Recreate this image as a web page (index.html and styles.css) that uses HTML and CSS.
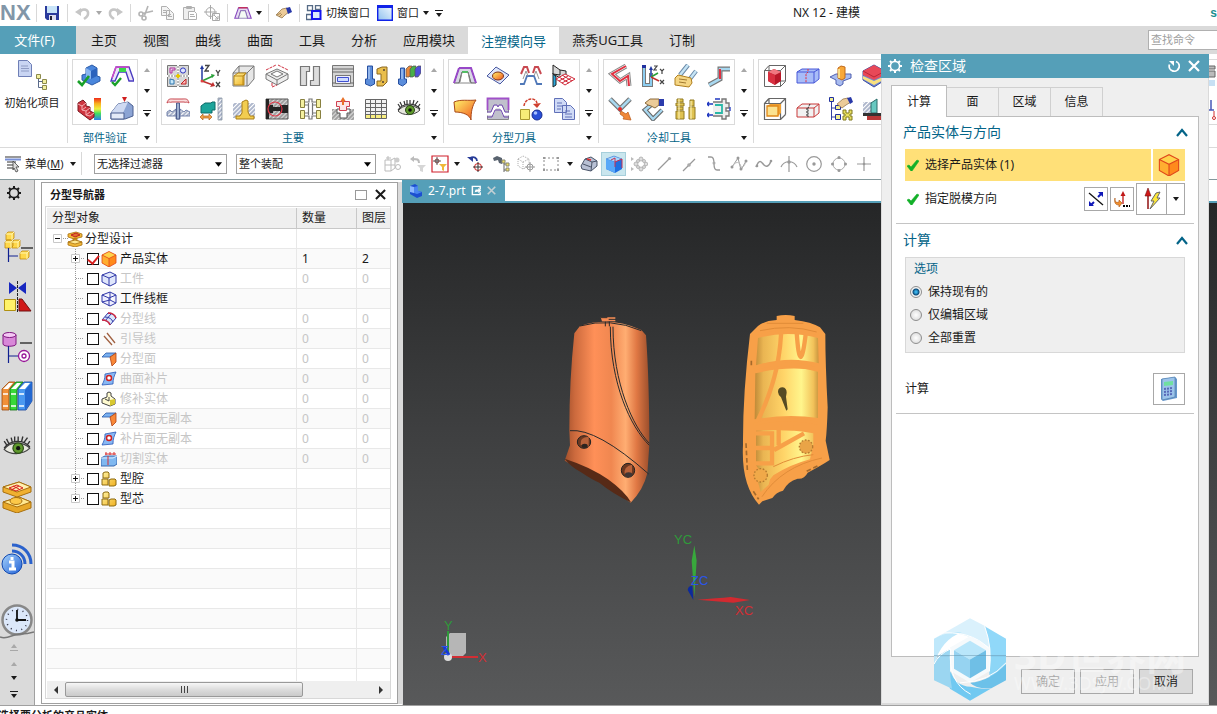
FILE: index.html
```html
<!DOCTYPE html>
<html lang="zh-CN">
<head>
<meta charset="utf-8">
<title>NX 12 - 建模</title>
<link rel="stylesheet" href="styles.css">
</head>
<body>
<svg class="sprite" aria-hidden="true">
<defs>
<linearGradient id="gWin" x1="0" y1="1" x2="1" y2="0"><stop offset="0" stop-color="#8fc0ee"/><stop offset="1" stop-color="#f4faff"/></linearGradient>
<linearGradient id="gGold" x1="0" y1="0" x2="1" y2="1"><stop offset="0" stop-color="#fff3a0"/><stop offset="1" stop-color="#f0b020"/></linearGradient>
<linearGradient id="gOrange" x1="0" y1="0" x2="1" y2="1"><stop offset="0" stop-color="#fff36a"/><stop offset="1" stop-color="#f0521c"/></linearGradient>
<linearGradient id="gRain" x1="0" y1="0" x2="0" y2="1"><stop offset="0" stop-color="#f02a1a"/><stop offset=".25" stop-color="#f8b020"/><stop offset=".5" stop-color="#f0f040"/><stop offset=".7" stop-color="#40e060"/><stop offset="1" stop-color="#3080f0"/></linearGradient>
<linearGradient id="gBlue" x1="0" y1="0" x2="1" y2="1"><stop offset="0" stop-color="#a8d4fb"/><stop offset="1" stop-color="#1f5fd6"/></linearGradient>
<pattern id="hatch" width="3" height="3" patternUnits="userSpaceOnUse" patternTransform="rotate(45)"><rect width="3" height="3" fill="#fff"/><path d="M1 0v3" stroke="#5d6f9a" stroke-width="1"/></pattern>
<pattern id="hatchG" width="3" height="3" patternUnits="userSpaceOnUse" patternTransform="rotate(45)"><rect width="3" height="3" fill="#ddd"/><path d="M1 0v3" stroke="#666" stroke-width="1"/></pattern>
</defs>
<symbol id="caret" viewBox="0 0 6 4"><path d="M0 0h6L3 4z"/></symbol>
<symbol id="caretUp" viewBox="0 0 6 4"><path d="M0 4h6L3 0z"/></symbol>
<symbol id="caretBar" viewBox="0 0 8 7"><path d="M0 0h8v1H0zM1 3h6L4 7z"/></symbol>
<symbol id="save" viewBox="0 0 16 16"><path d="M1 1h14v14H3l-2-2z" fill="#2a3a9c"/><path d="M3 1h10v7H3z" fill="#c8e4f8"/><path d="M5 10h7v5H5z" fill="#dde"/><path d="M6 11h2v4H6z" fill="#223"/></symbol>
<symbol id="undo" viewBox="0 0 16 16"><path d="M0 7l6-4v8z" fill="#c6c6c6"/><path d="M5 7c2-4 9-3 8 2 0 2-1 3-4 5" fill="none" stroke="#c6c6c6" stroke-width="2.600"/></symbol>
<symbol id="redo" viewBox="0 0 16 16"><path d="M16 7l-6-4v8z" fill="#c6c6c6"/><path d="M11 7C9 3 2 4 3 9c0 2 1 3 4 5" fill="none" stroke="#c6c6c6" stroke-width="2.600"/></symbol>
<symbol id="cut" viewBox="0 0 16 16"><g fill="none" stroke="#b4b4b4" stroke-width="1.600"><path d="M4.500 8.500 15 6M6.500 10.500 10 1"/><circle cx="3" cy="9" r="2"/><circle cx="6" cy="13" r="2"/></g></symbol>
<symbol id="copy" viewBox="0 0 16 16"><g fill="#f4f4f4" stroke="#b0b0b0"><path d="M1.500 1.500h5l3 3v6h-8zM6.500 5.500h4l3 3v6h-7z"/><path d="M3 5.500h3M3 7.500h3M8 9.500h3M8 11.500h4"/></g></symbol>
<symbol id="paste" viewBox="0 0 16 16"><g fill="#efefef" stroke="#b0b0b0"><path d="M1.500 2.500h11v12h-11zM4.500 1.500h5v2h-5z"/><path d="M6.500 6.500h6l2 2v6h-8z" fill="#fff"/><path d="M8 9.500h4M8 11.500h5"/></g></symbol>
<symbol id="target" viewBox="0 0 16 16"><g fill="none" stroke="#a8a8a8"><circle cx="6.500" cy="7" r="4.500"/><path d="M6.500 0v14M0 7h13M8.500 8.500h7v7h-7zM10 10l4 4v-3m0 3h-3"/></g></symbol>
<symbol id="trap" viewBox="0 0 24 24"><path d="M6 5h12l5 14h-5L15 9H9L6 19H1z" fill="#e6dcf2" stroke="#8a4cc0" stroke-width="1.500"/><path d="M6 5h12" stroke="#c03060" stroke-width="2"/><path d="M6 19 9 9h6l3 10z" fill="#f4fbf4" stroke="#7a6aa8"/></symbol>
<symbol id="hand" viewBox="0 0 16 16"><path d="m0 10 6-6 5-1 2 4-4 3-3 3-2-1z" fill="#eccb98" stroke="#8b6b3d" stroke-width=".7"/><path d="m10 3 4-1 2 5-4 2z" fill="#2838a8"/><path d="m1 10 4-2M3 12l3-3" stroke="#8b6b3d" stroke-width=".7"/></symbol>
<symbol id="switch" viewBox="0 0 16 16"><path d="M1.500.5h5v5h-5zM9.500.5h5v4h-5zM.5 9.500h5v5h-5z" fill="none" stroke="#566b86" stroke-width="1.300"/><path d="M6 6h8.500v8H6z" fill="#dceafd" stroke="#1616ee" stroke-width="2"/></symbol>
<symbol id="window" viewBox="0 0 16 16"><path d="M.7.7h14.600v14.600H.7z" fill="url(#gWin)" stroke="#1022e8" stroke-width="1.400"/><path d="M1 1h14v2H1z" fill="#1022e8"/></symbol>
<symbol id="initproj" viewBox="0 0 30 32"><path d="M1.500 1.500h9l4 4v12h-13z" fill="#c9d5f3" stroke="#6f7fb6"/><path d="M4 7h7M4 9.500h8M4 12h8" stroke="#8f9cc4"/><g fill="#f3f0a0" stroke="#8c8a4c"><path d="M19.500 15.500h4v4h-4zM25.500 20.500h4v4h-4zM25.500 26.500h4v4h-4z"/></g><path d="M21.500 20v8.500h4M21.500 22.500h4" fill="none" stroke="#5a6a8a"/></symbol>
<symbol id="partcheck" viewBox="0 0 24 24"><path d="M9 4l6-3 5 3v8l3 1v4l-8 4-10-5v-5l4-1z" fill="#4a86dc" stroke="#2a5aa8"/><path d="M9 4l5 3v8l-5-2z" fill="#8ab6f0"/><path d="M14 7l6-3v8l-6 3z" fill="#2b62bc"/><path d="m1 17 4 4 7-9" fill="none" stroke="#18a028" stroke-width="2.600"/></symbol>
<symbol id="trapcheck" viewBox="0 0 24 24"><path d="M6 3h13l5 14h-5L16 8H9L5 17H1z" fill="#ece4f8" stroke="#4a3cc0" stroke-width="1.400"/><path d="M6 3h13M2 14l4-11" stroke="#d04ac8" stroke-width="1.500"/><path d="M9 4h7v4H9z" fill="#38d848"/><path d="m2 18 3 3 6-7" fill="none" stroke="#18a028" stroke-width="2.400"/></symbol>
<symbol id="rain" viewBox="0 0 24 24"><path d="M17 1h7v22h-7z" fill="url(#gRain)"/><path d="M1 6l5-3 3 3v3l4 1v4l4 2v4l-4 3L1 14z" fill="#cf3540" stroke="#7a1820"/><path d="M1 7l4 2 4-3M5 9v4l4-3M5 13l4 1 4-3M9 14v4l4-3M9 18l4 1 4-3" fill="none" stroke="#f4b0b4"/></symbol>
<symbol id="slopetop" viewBox="0 0 24 24"><path d="M1 22v-6l7-9 10-2 5 4v10l-8 3z" fill="#8ca4d4" stroke="#4b5f90"/><path d="M1 16l7-9 10-2-5 11z" fill="#cfdaf2"/><path d="M1 16h13v6H1z" fill="#e4eaf8" stroke="#4b5f90"/><path d="M12 0h5l-2.500 5z" fill="#d02020"/></symbol>
<symbol id="cavity" viewBox="0 0 24 24"><path d="M1.500 1.500h21v21h-21z" fill="#d8d8d8" stroke="#777"/><path d="M12 1v22M1 12h22" stroke="#fff" stroke-width="2"/><path d="M12 2v20M2 12h20" stroke="#777" stroke-dasharray="2 1"/><path d="M4 4h5v2H6v3H4z" fill="#e8d0e8" stroke="#b030a0"/><circle cx="17" cy="6.500" r="2.600" fill="#dfe6ff" stroke="#3038c0"/><path d="M4 20v-5l4 1v4z" fill="#c8e8fa" stroke="#3078b0"/><path d="m15 20 5-5v5z" fill="#fbb" stroke="#c02020"/><path d="M12 10v4M10 12h4" stroke="#e8c800" stroke-width="2"/></symbol>
<symbol id="csys" viewBox="0 0 24 24"><path d="M3 17V3" stroke="#2038a0" stroke-width="1.500"/><path d="M1 5l2-4 2 4z" fill="#2038a0"/><path d="m3 17 11-5" stroke="#28a038" stroke-width="1.500"/><path d="m12 10 4 1-3 3z" fill="#28a038"/><path d="m3 17 11 4" stroke="#c03030" stroke-width="1.500"/><path d="m14 18 2 4-5 1z" fill="#c03030"/><circle cx="3" cy="17" r="1.500" fill="#e04040"/><path d="M6 1.500h4L6 7h4M17 6l2 3 2-3M19 9v3M17 18l4 5M21 18l-4 5" fill="none" stroke="#444" stroke-width="1.300"/></symbol>
<symbol id="wirebox" viewBox="0 0 24 24"><path d="M1 9l6-7h15v13l-6 7H1z" fill="#e6e6e6" stroke="#777"/><path d="M7 2v7M1 9h14v13M15 9l7-7" fill="none" stroke="#777"/><path d="M2 12l4-3h8l-2 3v9H2z" fill="url(#gGold)" stroke="#b88818"/><path d="M2 12h9v9M11 12l3-3" fill="none" stroke="#b88818"/></symbol>
<symbol id="stack" viewBox="0 0 24 24"><g fill="#eee" stroke="#777"><path d="M1 10v5l11 6 11-6v-5"/><path d="m1 10 11-5 11 5-11 6z"/><path d="m6 10 6-3 6 3-6 3z" fill="#fff"/><path d="M12 16v5"/></g><path d="M1 6l10-5M13 1l10 5M7 19v4l5-2" fill="none" stroke="#d03040" stroke-dasharray="3 1"/></symbol>
<symbol id="blocks" viewBox="0 0 24 24"><path d="M2.500 2.500h9v5h-3v14h-6zM21.500 2.500h-6v14h-3v5h9z" fill="#ddd" stroke="#777" stroke-width="1.200"/></symbol>
<symbol id="moldbase" viewBox="0 0 24 24"><path d="M1.500 1.500h21v21h-21z" fill="#d4d4d4" stroke="#777"/><path d="M1 5h22M1 8h22M1 19h22" stroke="#666"/><path d="M4.500 11.500h15v8h-15z" fill="#eef" stroke="#777"/><path d="M6.500 13.500h11v4h-11z" fill="#cfdcff" stroke="#4050d0"/></symbol>
<symbol id="pinplate" viewBox="0 0 24 24"><path d="M3.500 2h5v13h2v5l-4 2-5-2v-5h2z" fill="#5b8ddb" stroke="#2850a0"/><path d="M5 3v12" stroke="#c8dcfa"/><path d="M13 5l5-2h5v15l-4 4h-6v-5h4v-7h-4z" fill="#e9be4c" stroke="#8c6820"/><circle cx="20" cy="6" r="1" fill="#543"/><circle cx="19" cy="18" r="1" fill="#543"/></symbol>
<symbol id="library" viewBox="0 0 24 24"><path d="M3.500 4h4v11h2v4l-4 3-4-2v-5h2z" fill="#5b8ddb" stroke="#2850a0"/><path d="M5 5v10" stroke="#c8dcfa"/><g stroke="#555" stroke-width=".7"><path d="m9 5 3-3h3v8l-3 3H9z" fill="#e8883a"/><path d="m13 5 3-3h3v8l-3 3h-3z" fill="#48b048"/><path d="m18 5 3-3h3v7l-3 4h-3z" fill="#5050d8"/></g></symbol>
<symbol id="ejector" viewBox="0 0 24 24"><path d="M1 19v-4l3-2 2 2 4-3v10h4V12l4 3 2-2 4 2v4z" fill="url(#hatch)" stroke="#56689a" stroke-width=".8"/><path d="M10.500 6h3v16h-3z" fill="#9fb0d0" stroke="#506090"/><path d="M1 6c1-5 4-4 7-4h8c3 0 6-1 7 4-3-2-3 0-5-1H6C4 6 3 4 1 6z" fill="#fadddd" stroke="#c84850"/></symbol>
<symbol id="slider" viewBox="0 0 24 24"><path d="M19 1h4v22h-4z" fill="url(#hatch)" stroke="#678" stroke-width=".6"/><path d="M2 9l4-3h6l1-1h3v8h-3v3H2z" fill="#1ca49a" stroke="#0c6a68"/><path d="m1 20 3-3v2h6v-2l3 3-3 3v-2H4v2z" fill="#f0a048" stroke="#b06018" stroke-width=".7"/></symbol>
<symbol id="insert" viewBox="0 0 24 24"><path d="M1 6h22v15H1z" fill="url(#hatch)"/><path d="M4 22v-3h4l2-3V5l4-2 2 1v11l2 4h4v3z" fill="#f2cd50" stroke="#a87c18"/></symbol>
<symbol id="sprue" viewBox="0 0 24 24"><path d="M1 2h22v20H1z" fill="url(#hatchG)" stroke="#555"/><path d="M1 2h3v6h4v2h7V8h8v8h-8v-2H8v2H4v6H1z" fill="#242424"/><circle cx="10" cy="12" r="7" fill="none" stroke="#e03848" stroke-width="1.200"/></symbol>
<symbol id="runner" viewBox="0 0 24 24"><path d="M7 5h4V2h3v3h4M7 19h4v3h3v-3h4M10.500 6v12M14.500 6v12M7 8h3M7 16h3M15 8h3M15 16h3" fill="none" stroke="#777" stroke-width="1.200"/><g fill="#f4f0a0" stroke="#888040"><path d="M2.500 2.500h4v8h-4zM18.500 2.500h4v8h-4zM2.500 13.500h4v8h-4zM18.500 13.500h4v8h-4z"/></g></symbol>
<symbol id="pocket" viewBox="0 0 24 24"><path d="M1 12h22v11H1z" fill="url(#hatchG)"/><path d="M6 12v4h3v5h7v-5h3v-4z" fill="#fff" stroke="#555"/><path d="M5.500 4.500h13v5h-3v4h-7v-4h-3z" fill="#fbe8e8" stroke="#d04050"/><path d="M9.500 4 12 0l2.500 4H13v4h-2V4z" fill="#e87028"/></symbol>
<symbol id="bom" viewBox="0 0 24 24"><path d="M1.500 2.500h21v19h-21z" fill="#f2f2f2" stroke="#666"/><path d="M2 18h20v3H2z" fill="#f8ee80"/><path d="M1 6.500h22M1 10.500h22M1 14.500h22M1 17.500h22M6.500 2v19M11.500 2v19M17.500 2v19" stroke="#666"/></symbol>
<symbol id="eye" viewBox="0 0 24 24"><path d="M1 14C6 7 17 7 23 13c-6 6-17 6-22 1z" fill="#e8e8e0" stroke="#444"/><circle cx="13" cy="13" r="4.500" fill="#5f9a2c" stroke="#2b4a18"/><circle cx="13" cy="13" r="1.800" fill="#111"/><path d="M1 13C6 6 17 5 23 12M3 10 1 7M5 9 3 5M8 8 7 4M10 7V3M13 7V3M16 7l1-4M18 8l3-4M21 10l2-3" fill="none" stroke="#333" stroke-width="1.200"/></symbol>
<symbol id="trap2" viewBox="0 0 24 24"><path d="M6 4h12l5 15h-5L15 8H9L6 19H1z" fill="#d8d8e4" stroke="#555"/><path d="M6 4h12l5 15M6 4 1 19" fill="none" stroke="#9848c8" stroke-width="2"/><path d="M9 8h6" stroke="#38c850" stroke-width="1.500"/><path d="M9 8l-2 10M15 8l2 10M6 19h12" stroke="#888"/></symbol>
<symbol id="patch" viewBox="0 0 24 24"><path d="M1 12 10 3l13 8-9 9z" fill="#dfe6fa" stroke="#4858a0"/><ellipse cx="12" cy="12" rx="5.500" ry="4" fill="url(#gOrange)" stroke="#803018"/></symbol>
<symbol id="profile" viewBox="0 0 24 24"><path d="M2 10 5 3h3l2 6M14 9l2-6h3l3 7" fill="none" stroke="#c84850" stroke-width="2"/><path d="M1 20h4l3-8h7l3 8h5" fill="none" stroke="#5078b8" stroke-width="1.800"/><path d="m4 15 3-8 2 5M20 15l-3-8-2 5" fill="none" stroke="#999"/></symbol>
<symbol id="redmesh" viewBox="0 0 24 24"><path d="M1 9v14l3-2v-8z" fill="#2ca8dc" stroke="#222"/><path d="M1 1l7 5 6 1v4l-4 4-9-5z" fill="#d8d8d8" stroke="#222"/><path d="M8 6v5M1 10l7 1" stroke="#222"/><path d="m4 15 9-5 10 5-10 6zM7 13l10 6M10 11l10 6M7 17l9-5M10 19l9-5" fill="#fff" stroke="#d02838"/></symbol>
<symbol id="sheet" viewBox="0 0 24 24"><path d="M1 5c7-3 14-1 22-2-4 6-5 12-5 20-1-5-8-8-16-8z" fill="url(#gOrange)" stroke="#a84818"/></symbol>
<symbol id="corecav" viewBox="0 0 24 24"><path d="M1.500 1.500h21v21h-21z" fill="#c0c0cc" stroke="#888"/><path d="M1.500 13V1.500h21V13" fill="none" stroke="#a050c8" stroke-width="1.800"/><path d="M1 17h5l3-7h6l3 7h5" fill="none" stroke="#fff" stroke-width="3"/><path d="M1 15h4l3-7h3l1 2 1-2h3l3 7h4M1 20h5l3-7h6l3 7h5" fill="none" stroke="#7048b0"/></symbol>
<symbol id="swap" viewBox="0 0 24 24"><path d="M1.500 12.500h9v10h-9z" fill="#f6ec78" stroke="#a89830"/><circle cx="18" cy="18" r="5" fill="#2a50d8" stroke="#182c90"/><circle cx="16.500" cy="16" r="1.800" fill="#a8c0ff"/><path d="M5 9c1-9 13-9 13-2" fill="none" stroke="#d04030" stroke-width="1.500" stroke-dasharray="3 1"/><path d="m14 7 4 4 4-5z" fill="#d04030"/></symbol>
<symbol id="docs" viewBox="0 0 24 24"><g fill="#cfdaf6" stroke="#6070b8"><path d="M2.500 1.500h8l4 4v10h-12zM10.500 8.500h8l4 4v10h-12z"/><path d="M5 6h5M5 9h6M5 12h4M13 14h5M13 17h7M13 20h7"/></g></symbol>
<symbol id="chan1" viewBox="0 0 24 24"><path d="M18 2 4 10l8 7 8-5 1 10" fill="none" stroke="#888" stroke-width="5"/><path d="M18 2 4 10l8 7 8-5 1 10" fill="none" stroke="#fff" stroke-width="3"/><path d="M18 2 4 10l8 7 8-5 1 10" fill="none" stroke="#e03040" stroke-width="2"/></symbol>
<symbol id="chan2" viewBox="0 0 24 24"><path d="M3 1v20h7V9" fill="none" stroke="#777" stroke-width="4"/><path d="M3 1v20h7V9" fill="none" stroke="#8ccdf0" stroke-width="2"/><path d="M1 1h4v3H1z" fill="#2030a0"/><path d="M10 13V4" stroke="#2038a0" stroke-width="1.500"/><path d="m10 13 7-4" stroke="#28a038" stroke-width="1.500"/><path d="m10 13 8 4" stroke="#c03030" stroke-width="1.500"/><path d="M8 6l2-4 2 4z" fill="#2038a0"/><path d="M13 2h3l-3 4h3M19 5l2 2 2-2M21 7v3M19 16l4 4M23 16l-4 4" fill="none" stroke="#444" stroke-width="1.200"/></symbol>
<symbol id="chan3" viewBox="0 0 24 24"><path d="M14 1 6 11M22 7 12 20" fill="none" stroke="#6b8aa8" stroke-width="4.500"/><path d="M14 1 6 11M22 7 12 20" fill="none" stroke="#c5e4f5" stroke-width="2.500"/><path d="m1 14 3-3 13 3 1 5-3 4-14-2z" fill="#f5d684" stroke="#b08020"/><path d="m5 15 8 1M5 18l7 1" stroke="#a07830"/></symbol>
<symbol id="chan4" viewBox="0 0 24 24"><path d="M23 5H13v10L2 21" fill="none" stroke="#777" stroke-width="5"/><path d="M23 5H13v10L2 21" fill="none" stroke="#a8d8f0" stroke-width="2.600"/><path d="M13 5v10" stroke="#e03040" stroke-width="2"/></symbol>
<symbol id="chan5" viewBox="0 0 24 24"><path d="m2 2 10 10L22 2" fill="none" stroke="#777" stroke-width="5"/><path d="m2 2 10 10L22 2" fill="none" stroke="#a8d8f0" stroke-width="2.600"/><circle cx="12" cy="12" r="2" fill="#e82828"/><path d="m13 14 5 3 2-2 3 8-8-1 1-2-4-3z" fill="#f08838" stroke="#b85818" stroke-width=".7"/></symbol>
<symbol id="chan6" viewBox="0 0 24 24"><path d="M10 8 4 13l8 9 9-9" fill="none" stroke="#666" stroke-width="4.500"/><path d="M10 8 4 13l8 9 9-9" fill="none" stroke="#a8d8f0" stroke-width="2.400"/><path d="m4 6 5-4h9v6l-4 3-4-2-3-1z" fill="#eccb98" stroke="#8b6b3d"/><path d="M18 2h5v7h-5z" fill="#2c3cac"/></symbol>
<symbol id="fitting" viewBox="0 0 24 24"><g fill="#dfc252" stroke="#927a20"><path d="M3 2h6v3H3zM2 6h8v3H2zM3 10h6v3H3zM2 14h8v8H2zM16 3h4v6h-4zM15 10h6v12h-6z"/></g><path d="M5 2v20M17 4v18" stroke="#fff6c0"/></symbol>
<symbol id="circuit" viewBox="0 0 24 24"><path d="M6 5h9V2h4v4h3v5h-3v3h3v5h-3v3h-4v-3H6" fill="#eee" stroke="#777" stroke-width="1.400"/><path d="M8 8h7v8H8" fill="none" stroke="#2ab8a8" stroke-width="1.800"/><path d="M0 7h6M0 18h6M2 5 0 7l2 2M2 16l-2 2 2 2M8 2h5M23 10v4" stroke="#2038c0" fill="none" stroke-width="1.300"/></symbol>
<symbol id="redcube" viewBox="0 0 24 24"><path d="M1.500 6.500h16v16h-16zM6 1.500h16.500v16M1.500 6.500l4.500-5M17.500 6.500l5-5M17.500 22.500l5-5M6 2v15h16" fill="none" stroke="#666"/><path d="m5 8 6-3 7 3v9l-6 4-7-4z" fill="#b81828"/><path d="m5 8 6-3 7 3-6 3z" fill="#f07880"/><path d="m5 8 7 3v10l-7-4z" fill="#d83040"/></symbol>
<symbol id="bluebox" viewBox="0 0 24 24"><path d="M1 8l5-3h17v10l-5 4H1z" fill="#a8bcf8" stroke="#4858d8"/><path d="M1 8h17v11M18 8l5-3" fill="none" stroke="#4858d8"/><path d="M12 5v3l-2 2v9" fill="none" stroke="#e03040" stroke-dasharray="2 1"/></symbol>
<symbol id="crossbox" viewBox="0 0 24 24"><path d="m1 13 6-3h15v4l-8 3v3l-3 2-4-2v-4z" fill="#a8bcf0" stroke="#5060b0"/><path d="m9 4 3-2 4 1v11l-3 2-4-2z" fill="#f8a838" stroke="#c06818"/><path d="M10 5v9" stroke="#fff3a0" stroke-width="1.500"/></symbol>
<symbol id="layers" viewBox="0 0 24 24"><path d="m1 7 11-6 11 6v9l-11 7-11-7z" fill="#6c86d8" stroke="#4050a0"/><path d="m1 12 11 5 11-5v3l-11 6-11-6z" fill="#f8e080"/><path d="m1 7 11-6 11 6v4l-11 5-11-5z" fill="#e84858"/><path d="m1 7 11 6 11-6" fill="none" stroke="#b82838"/></symbol>
<symbol id="yellowbox" viewBox="0 0 24 24"><path d="M1.500 6.500h16v16h-16zM6 1.500h16.500v16M1.500 6.500l4.500-5M17.500 6.500l5-5M17.500 22.500l5-5M6 2v4" fill="none" stroke="#666" stroke-width="1.200"/><path d="M4 9l3-2h11v9l-3 3z" fill="#f0a030"/><path d="M4 9h11v10H4z" fill="#fbe290" stroke="#e08818" stroke-width="1.300"/></symbol>
<symbol id="redbox" viewBox="0 0 24 24"><path d="M1 11l5-4h17v9l-5 4H1z" fill="#f2f2f2" stroke="#c83838"/><path d="M1 11h17v9M18 11l5-4" fill="none" stroke="#c83838"/><path d="M14 7l-2 4v9M11 11v8" fill="none" stroke="#222" stroke-dasharray="2 1"/></symbol>
<symbol id="treehand" viewBox="0 0 24 24"><path d="M2.500 5v18M2.500 11h5M2.500 20h5" stroke="#3040a0" fill="none"/><g fill="#f0ee90" stroke="#2030a0"><path d="M.5.5h4v4h-4zM6.500 8.500h5v4h-5zM6.500 17.500h5v5h-5z"/></g><path d="m8 7 6-5 5-1 3 4-5 3-4 3z" fill="#eccb98" stroke="#8b6b3d" stroke-width=".7"/><path d="m18 1 4-1 2 5-3 2z" fill="#2838a8"/><path d="M14 13h3v3h3v-3h3v4h-2v2h2v4h-3v-3h-3v3h-3v-4h2v-2h-2z" fill="#e8e060" stroke="#807820"/></symbol>
<symbol id="cutaway" viewBox="0 0 24 24"><path d="M1 5h10v12H1z" fill="url(#hatch)"/><path d="M9 16V6l6-4v14z" fill="#68c8c0" stroke="#2a6a68"/><path d="M1 16h22v3H1z" fill="#333"/><path d="M5 19h15v4H5z" fill="#b83838"/></symbol>
<symbol id="bench" viewBox="0 0 24 24"><path d="M1 2h22v3H1zM1 7h22v6H1z" fill="#bbb" stroke="#666"/><path d="M1 16h22v6H1z" fill="#c8e0f4"/></symbol>
<symbol id="bracket" viewBox="0 0 24 24"><path d="M4 3v10h15V3M4 13h18" stroke="#4858b8" fill="none" stroke-width="1.500"/><path d="M22 14v5" stroke="#d03030"/><circle cx="22" cy="21" r="1.500" fill="none" stroke="#d03030"/></symbol>
<symbol id="menulist" viewBox="0 0 18 18"><path d="M1 2h16M3 7h9M3 10h7M3 13h7" stroke="#777" stroke-width="1.500"/><path d="M1 4.500h16" stroke="#7890d8" stroke-width="2"/><path d="m9 6 6 6h-3l2 4-2 1-2-4-1 2z" fill="#ddd" stroke="#444" stroke-width=".8"/></symbol>
<symbol id="s1" viewBox="0 0 18 18"><path d="M1 5h6v11H1zM7 5l4-2v10l-4 3M1 10h10M4 1v4M2 3h5" fill="none" stroke="#bbb"/><circle cx="13" cy="5" r="2.500" fill="#ccc"/><circle cx="14" cy="12" r="2.500" fill="none" stroke="#bbb"/></symbol>
<symbol id="s2" viewBox="0 0 18 18"><path d="M1 4l4-3v6z" fill="#bbb"/><path d="M4 4c4 0 6 0 6 4" fill="none" stroke="#bbb" stroke-width="2"/><path d="M8 10h9l-3 3v4l-3-1v-3z" fill="#d6d6d6"/></symbol>
<symbol id="s3" viewBox="0 0 18 18"><path d="M1 1h16v16H1z" fill="#fff" stroke="#d0202c" stroke-width="1.200"/><circle cx="6" cy="6" r="2" fill="none" stroke="#844"/><path d="M6 2v8M2 6h8" stroke="#333" stroke-width=".8"/><path d="M8 9h8l-3 3v4l-2-1v-3z" fill="#f0b838"/></symbol>
<symbol id="s4" viewBox="0 0 18 18"><path d="M0 2h6v5z" fill="#283c98"/><path d="M3 3c4-2 7 0 7 3" fill="none" stroke="#283c98" stroke-width="1.800"/><circle cx="11" cy="12" r="3.500" fill="#fff" stroke="#d02020"/><path d="M11 7v10M6 12h10" stroke="#333"/></symbol>
<symbol id="s5" viewBox="0 0 18 18"><path d="m1 3 4-2 5 2v6L7 8 6 5 2 6z" fill="#59636f"/><path d="M12 5v12M12 9h4M12 15h4" stroke="#666"/><path d="M10 5h3v3h-3zM14 8h3v3h-3zM14 13h3v3h-3z" fill="#f2e060" stroke="#887"/></symbol>
<symbol id="s6" viewBox="0 0 18 18"><path d="m1 4 5-3 6 3v7l-6 3-5-3zM1 4l5 3 6-3M6 7v7" fill="none" stroke="#aaa" stroke-dasharray="1 1"/><circle cx="13" cy="12" r="3" fill="#fff" stroke="#999"/><path d="M13 7v10M8 12h10" stroke="#999"/></symbol>
<symbol id="s7" viewBox="0 0 18 18"><path d="M2 3h14v12H2z" fill="none" stroke="#888" stroke-dasharray="2 2"/><path d="M1 2h2v2H1zM15 2h2v2h-2zM1 14h2v2H1zM15 14h2v2h-2z" fill="#999"/></symbol>
<symbol id="s8" viewBox="0 0 18 18"><path d="M1 11 5 4l6-2 6 4v5l-6 5-9-2z" fill="#b8c0d4" stroke="#4a5468"/><path d="m5 4 7 3 5-1M12 7l-1 9M3 9l8 3" fill="none" stroke="#4a5468"/><path d="m7 4 4 1" stroke="#e03030" stroke-width="1.500"/></symbol>
<symbol id="s9" viewBox="0 0 18 18"><path d="m1 4 8-3 8 3v10l-7 4-9-4z" fill="#1f6fe0"/><path d="m1 4 8-3 8 3-7 3z" fill="#a8d8ff" stroke="#4880d0" stroke-width=".6"/><path d="m1 4 9 3v11l-9-4z" fill="#58a8f8"/><path d="M10 7l7-3v9M10 7v5M6 5l4-2v4" fill="none" stroke="#c83050"/></symbol>
<symbol id="s10" viewBox="0 0 18 18"><g fill="#ddd" stroke="#aaa" stroke-width=".8"><circle cx="11" cy="4" r="2"/><circle cx="11" cy="14" r="2"/><circle cx="16" cy="9" r="1.800"/><circle cx="6" cy="9" r="2"/><circle cx="8" cy="6" r="1.500"/><circle cx="8" cy="12" r="1.500"/><circle cx="14" cy="12" r="1.500"/><circle cx="14" cy="6" r="1.500"/></g><path d="M1 2l3 2-3 2zM1 12l3 2-3 2z" fill="#bbb"/></symbol>
<symbol id="s11" viewBox="0 0 18 18"><path d="M3 15 14 4" stroke="#999" stroke-width="1.300"/><circle cx="14.500" cy="3.500" r="1.600" fill="#aaa"/></symbol>
<symbol id="s12" viewBox="0 0 18 18"><path d="M3 16 15 4" stroke="#999" stroke-width="1.300"/><circle cx="9" cy="10" r="1.800" fill="#aaa"/></symbol>
<symbol id="s13" viewBox="0 0 18 18"><path d="M3 2h3c6 0 0 13 6 13h3" fill="none" stroke="#999" stroke-width="1.300"/><circle cx="9" cy="8" r="1.500" fill="#aaa"/></symbol>
<symbol id="s14" viewBox="0 0 18 18"><path d="M2 12 8 3l3 12 5-9" fill="none" stroke="#999"/><path d="M2 12c3-6 8-6 9 0 2 1 4-2 5-6" fill="none" stroke="#bbb"/><g fill="#999"><circle cx="2" cy="12" r="1.500"/><circle cx="8" cy="3" r="1.500"/><circle cx="11" cy="14" r="1.500"/><circle cx="16" cy="6" r="1.500"/></g></symbol>
<symbol id="s15" viewBox="0 0 18 18"><path d="M1 12c4-10 6-4 8-2s5 2 7-4" fill="none" stroke="#999" stroke-width="1.500"/><circle cx="2" cy="11" r="1.300" fill="#999"/><circle cx="16" cy="6" r="1.300" fill="#999"/></symbol>
<symbol id="s16" viewBox="0 0 18 18"><path d="M1 12c3-7 13-7 16 0M9 1v16" fill="none" stroke="#999" stroke-width="1.200"/><circle cx="9" cy="7" r="1.700" fill="#999"/></symbol>
<symbol id="s17" viewBox="0 0 18 18"><circle cx="9" cy="9" r="7.300" fill="none" stroke="#999" stroke-width="1.200"/><circle cx="9" cy="9" r="1.700" fill="#999"/></symbol>
<symbol id="s18" viewBox="0 0 18 18"><circle cx="9" cy="9" r="6" fill="none" stroke="#aaa"/><g fill="#999"><circle cx="9" cy="2.500" r="1.500"/><circle cx="9" cy="15.500" r="1.500"/><circle cx="2.500" cy="9" r="1.500"/><circle cx="15.500" cy="9" r="1.500"/></g></symbol>
<symbol id="s19" viewBox="0 0 18 18"><path d="M9 2v14M2 9h14" stroke="#999" stroke-width="1.200"/><circle cx="9" cy="9" r="1.300" fill="#999"/></symbol>
<symbol id="gear" viewBox="0 0 16 16"><circle cx="8" cy="8" r="4.600" fill="none" stroke="currentColor" stroke-width="1.600"/><path d="M8 1v2M8 13v2M1 8h2M13 8h2M3 3l1.500 1.500M11.500 11.500 13 13M3 13l1.500-1.500M11.500 4.500 13 3" stroke="currentColor" stroke-width="2"/></symbol>
<symbol id="asm" viewBox="0 0 32 32"><g fill="#ffd84a" stroke="#c08a10" stroke-width=".8"><path d="m5 3 2-2h6v6l-2 2H5zM4 11l2-2h6v6l-2 2H4zM11 11l2-2h6v6l-2 2h-6zM19 22l2-2h7v6l-2 2h-7z"/></g><path d="M5 3h6v6M11 3l2-2M4 11h6v6M10 11l2-2M11 11h6v6M17 11l2-2M19 22h7v6M26 22l2-2" fill="none" stroke="#fff6b0"/><path d="M7.500 17v14M7.500 25H17" stroke="#102090" stroke-width="1.200"/><path d="M20 17h12" stroke="#111" stroke-width="1.200"/></symbol>
<symbol id="mirror" viewBox="0 0 32 32"><path d="M8 1l8 6-8 6zM25 1l-8 6 8 6z" fill="#1828c0"/><path d="M16.500 0v32" stroke="#222" stroke-dasharray="3 1"/><path d="M3.500 18.500h11v11h-11z" fill="#fff36a" stroke="#b09010"/><path d="M18 18h3l9 12H18z" fill="#d01818" stroke="#701010"/></symbol>
<symbol id="cyl" viewBox="0 0 32 32"><path d="M2 4v9c0 3 13 3 13 0V4z" fill="#d888d8" stroke="#801880"/><ellipse cx="8.500" cy="4" rx="6.500" ry="2.500" fill="#f4c8f4" stroke="#801880"/><path d="M7.500 15v17M7.500 25H17" stroke="#102090" stroke-width="1.200"/><path d="M19 12h12" stroke="#111" stroke-width="1.200"/><circle cx="23" cy="25" r="5.500" fill="#fff" stroke="#981898" stroke-width="1.300"/><circle cx="23" cy="25" r="2" fill="none" stroke="#981898" stroke-width="1.300"/></symbol>
<symbol id="books" viewBox="0 0 32 32"><g stroke-width=".8"><path d="m1 8 7-7h6l-6 8v20H1z" fill="#f09038" stroke="#9a4a10"/><path d="m9 8 6-7h7l-6 8v20H9z" fill="#38d838" stroke="#107010"/><path d="m17 8 6-7h8v19l-6 9h-8z" fill="#4a98f0" stroke="#103c98"/><path d="m24 9 7-8v19l-7 9z" fill="#2468d0"/><path d="M2 8l6-6h4l-5 6zM10 8l6-6h4l-5 6zM18 8l6-6h5l-5 6z" fill="#fff"/><path d="M2 13h5M2 25h5M10 13h5M10 25h5M18 13h5M18 25h5" stroke="#fff" stroke-width="1.500"/></g></symbol>
<symbol id="molds" viewBox="0 0 32 32"><g stroke="#a87010"><path d="m2 6 16-5 12 5v5l-14 5L2 11z" fill="#f0b030"/><path d="m2 6 16-5 12 5-14 5z" fill="#fff0b0"/><path d="m2 21 16-5 12 5v6l-14 5L2 27z" fill="#e8a828"/><path d="m2 21 16-5 12 5-14 5z" fill="#ffe890"/><ellipse cx="15" cy="20" rx="6" ry="3.500" fill="#fcc848"/></g><path d="m8 7 8-3 6 3-7 3zM12 5l6 3M10 9l8-4" fill="none" stroke="#d82020"/></symbol>
<symbol id="info" viewBox="0 0 32 32"><circle cx="11" cy="21" r="10" fill="url(#gBlue)" stroke="#1048b0"/><path d="M11 14v3M8 19h4v7M8 26h7" stroke="#fff" stroke-width="3" fill="none"/><path d="M11 8c7 0 13 5 13 13M11 2c11 0 19 8 19 19" fill="none" stroke="#2b62cc" stroke-width="3"/></symbol>
<symbol id="clock" viewBox="0 0 34 36"><circle cx="17" cy="16" r="14.500" fill="#dce8fa" stroke="#888" stroke-width="2.500"/><circle cx="17" cy="16" r="10.500" fill="none" stroke="#334" stroke-width="1.500" stroke-dasharray="1 4.500"/><path d="M17 6v10h9" fill="none" stroke="#111" stroke-width="1.800"/><circle cx="17" cy="16" r="1.800" fill="#111"/><path d="M0 33c8 3 12-3 20-3 6 0 8 0 14-2" fill="none" stroke="#777" stroke-width="1.500"/></symbol>
<symbol id="tRoot" viewBox="0 0 16 16"><g stroke="#a87010" stroke-width=".8"><path d="m1 3 8-2 6 2v3L7 8 1 6z" fill="#f0b838"/><path d="m6 8 4-1v3H6z" fill="#e8a020"/><path d="m1 11 7-2 7 2v3l-7 2-7-2z" fill="#f0b838"/><path d="m1 11 7-2 7 2-7 2z" fill="#ffe890"/></g><path d="m4 4 5-2 4 2-5 2z" fill="#e07030" stroke="#c02020"/></symbol>
<symbol id="tCube" viewBox="0 0 16 16"><path d="m1 4 7-3.500L15 4v8l-7 4-7-4z" fill="#ff8a1c"/><path d="m1 4 7-3.500L15 4 8 7.500z" fill="#ffd24a"/><path d="m1 4 7 3.500V16l-7-4z" fill="#ffae30"/><path d="m1 4 7-3.500L15 4v8l-7 4-7-4zM1 4l7 3.500L15 4M8 7.500V16" fill="none" stroke="#e0481c" stroke-width=".8"/></symbol>
<symbol id="tBlock" viewBox="0 0 16 16"><path d="m1 4 8-3 6 3v8l-6 3-8-4z" fill="#dfe6fb" stroke="#3038a8"/><path d="m1 4 7 3 7-3M8 7v8" fill="none" stroke="#3038a8"/></symbol>
<symbol id="tWire" viewBox="0 0 16 16"><path d="m1 4 8-3 6 3v8l-6 3-8-4zM1 4l7 3 7-3M8 7v8M9 1v8l6 3M9 9l-8 2" fill="#eef" stroke="#3038a8"/></symbol>
<symbol id="tLine" viewBox="0 0 16 16"><path d="M1 9 7 2c4 0 7 2 8 5l-6 7C8 11 5 9 1 9z" fill="#d9e6fb" stroke="#3038a8"/><path d="M4 6c4 0 7 2 8 5M10 3 4 10" fill="none" stroke="#3038a8"/><path d="M1 9c4 0 7 2 8 5M15 7C14 4 11 2 7 2" fill="none" stroke="#d02840" stroke-width="1.500"/></symbol>
<symbol id="tGuide" viewBox="0 0 16 16"><path d="m3 5 8 9M6 2l8 10" stroke="#a06040" stroke-width="1.300"/></symbol>
<symbol id="tFace" viewBox="0 0 16 16"><path d="M1 6 5 2h10l-5 4z" fill="#78b0f0" stroke="#2858a8" stroke-width=".8"/><path d="m9 6 6-4v9l-4 4z" fill="#f88838" stroke="#b04010" stroke-width=".8"/></symbol>
<symbol id="tPatch" viewBox="0 0 16 16"><path d="m4 3 11-2c-2 4-3 7-3 12L1 14c2-4 3-6 3-11z" fill="#88b8f4" stroke="#2858b8" stroke-width=".8"/><circle cx="8" cy="7" r="2.500" fill="#fff" stroke="#d02020" stroke-width="1.500"/></symbol>
<symbol id="tTrim" viewBox="0 0 16 16"><path d="m1 8 5-2V2l2-1 2 1v3l4 3v5l-5 2-8-3z" fill="#fffbd0" stroke="#444"/><path d="m9 9 5-1v5l-5 2z" fill="#d8c830"/><path d="M4 8l4 2V6" fill="none" stroke="#444"/></symbol>
<symbol id="tSplit" viewBox="0 0 16 16"><path d="m0 7 4-2h12v8l-3 2H0z" fill="#80b8f0" stroke="#3868b0"/><path d="M0 7h12l4-2" fill="none" stroke="#d8ecff"/><path d="M5 1v3M9 1v3M13 1v3M4 3h11M7 5v9" stroke="#d83030"/></symbol>
<symbol id="tParts" viewBox="0 0 16 16"><g fill="url(#gGold)" stroke="#8c6a10"><path d="m2 2 2-1h3l1 1v5H2zM1 8h6v6H1zM8 9l2-1h4l1 1v5l-2 1H8z"/></g></symbol>
<symbol id="gMinus" viewBox="0 0 16 20"><path d="M1.500 5.500h8v8h-8z" fill="#fff" stroke="#c8c8c8"/><path d="M3 9.500h5" stroke="#111"/><path d="M11 9.500h5" stroke="#999" stroke-dasharray="1 1"/></symbol>
<symbol id="gPlus" viewBox="0 0 16 20"><path d="M4.500 0v20M10 9.500h3" stroke="#999" stroke-dasharray="1 1"/><path d="M.5 5.500h8v8h-8z" fill="#fff" stroke="#c8c8c8"/><path d="M2 9.500h5M4.500 7v5" stroke="#111"/></symbol>
<symbol id="gEnd" viewBox="0 0 16 20"><path d="M4.500 0v6M10 9.500h3" stroke="#999" stroke-dasharray="1 1"/><path d="M.5 5.500h8v8h-8z" fill="#fff" stroke="#c8c8c8"/><path d="M2 9.500h5M4.500 7v5" stroke="#111"/></symbol>
<symbol id="gTee" viewBox="0 0 16 20"><path d="M4.500 0v20M5 9.500h8" stroke="#999" stroke-dasharray="1 1"/></symbol>
<symbol id="part" viewBox="0 0 16 16"><path d="m2 3 5-2 3 2v5l4 1v4l-5 2-7-4z" fill="#1c4fd0"/><path d="m2 3 4 1v6l-4-1z" fill="#8ab8ff"/><path d="m6 4 4-1v5l4 1-5 2-3-1z" fill="#4a86f0"/></symbol>
<symbol id="modified" viewBox="0 0 12 12"><path d="M10 5V1.500H1.500v9H10V8" fill="none" stroke="#fff" stroke-width="1.600"/><path d="M4 8l1-3h3V3l3 3-3 3V7z" fill="#fff"/></symbol>
<symbol id="cross" viewBox="0 0 12 12"><path d="m1 1 10 10M11 1 1 11" stroke="currentColor" stroke-width="2.200"/></symbol>
<symbol id="tick" viewBox="0 0 12 12"><path d="M0 7l2-1 2 2 6-7 2 1-7 10H4z" fill="#12b028" stroke="#12b028" stroke-width=".6"/></symbol>
<symbol id="chev" viewBox="0 0 12 9"><path d="m1 8 5-6 5 6" fill="none" stroke="#046488" stroke-width="2.200"/></symbol>
<symbol id="reset" viewBox="0 0 12 12"><path d="M8 1.500a5 5 0 1 1-6.500 3" fill="none" stroke="#fff" stroke-width="1.800"/><path d="M1 1h5v5z" fill="#fff"/></symbol>
<symbol id="reverse" viewBox="0 0 16 16"><path d="m1 2 14 12" stroke="#111" stroke-width="1.300"/><path d="M3 14l3-3M10 6l4-4" stroke="#1018b8" stroke-width="2"/><path d="M10 1h5v5zM1 10v5h5z" fill="#1018b8"/></symbol>
<symbol id="vector" viewBox="0 0 16 16"><path d="M9 13V3" stroke="#c01818" stroke-width="1.300"/><path d="M6.500 5 9 0l2.500 5z" fill="#c01818"/><path d="M1 7c0 4 1 5 4 4V9l3 3-3 4v-2C1 14 0 11 1 7z" fill="#f09030" stroke="#a85010" stroke-width=".6"/><path d="M9 14h2v2H9zM12 14h2v2h-2zM15 14h1v2h-1z"/></symbol>
<symbol id="infer" viewBox="0 0 18 24"><path d="M5 22V8" stroke="#901010" stroke-width="1.500"/><path d="M2 9 5 1l3 8z" fill="#d01818" stroke="#701010" stroke-width=".6"/><path d="m13 6 4-1-3 6h3L7 22l4-8H8z" fill="#ffe838" stroke="#666"/></symbol>
<symbol id="calc" viewBox="0 0 20 26"><path d="m2 3 14-2 2 2v19l-14 3-2-2z" fill="#6898cc"/><path d="m3 3 13-2v20L3 24z" fill="#9cc4ea" stroke="#5080b0" stroke-width=".7"/><path d="m5 6 9-1v4l-9 1z" fill="#70e0a0"/><path d="M5 13l9-1M5 16l9-1M5 19l9-1" stroke="#5868b8" stroke-width="2" stroke-dasharray="2 1"/></symbol>
</svg>

<header class="titlebar">
  <span class="logo">NX</span>
  <i class="vsep"></i>
  <button class="qb" aria-label="保存"><svg class="i16"><use href="#save"/></svg></button>
  <i class="vsep"></i>
  <button class="qb" aria-label="撤消"><svg class="i16"><use href="#undo"/></svg></button>
  <button class="qc pale" aria-label="撤消列表"><svg class="car"><use href="#caret"/></svg></button>
  <button class="qb" aria-label="重做"><svg class="i16"><use href="#redo"/></svg></button>
  <i class="vsep"></i>
  <button class="qb" aria-label="剪切"><svg class="i16"><use href="#cut"/></svg></button>
  <button class="qb" aria-label="复制"><svg class="i16"><use href="#copy"/></svg></button>
  <button class="qb" aria-label="粘贴"><svg class="i16"><use href="#paste"/></svg></button>
  <button class="qb" aria-label="定位"><svg class="i16"><use href="#target"/></svg></button>
  <i class="vsep"></i>
  <button class="qb" aria-label="区域"><svg class="i18"><use href="#trap"/></svg></button>
  <button class="qc" aria-label="区域列表"><svg class="car"><use href="#caret"/></svg></button>
  <i class="vsep"></i>
  <button class="qb" aria-label="触控"><svg class="i16"><use href="#hand"/></svg></button>
  <i class="vsep"></i>
  <button class="qt"><svg class="i16"><use href="#switch"/></svg>切换窗口</button>
  <button class="qt"><svg class="i16"><use href="#window"/></svg>窗口<svg class="car"><use href="#caret"/></svg></button>
  <button class="qc" aria-label="更多"><svg class="carbar"><use href="#caretBar"/></svg></button>
  <h1 class="apptitle">NX 12 - 建模</h1>
  <span class="brand">s</span>
</header>

<nav class="menu">
  <button class="file">文件(F)</button>
  <button>主页</button><button>视图</button><button>曲线</button><button>曲面</button><button>工具</button><button>分析</button><button>应用模块</button><button class="on">注塑模向导</button><button>燕秀UG工具</button><button>订制</button>
  <input class="find" type="text" placeholder="查找命令" aria-label="查找命令">
</nav>

<section class="ribbon">
  <button class="init"><svg class="initic"><use href="#initproj"/></svg>初始化项目</button>
  <div class="group">
    <div class="gallery cols2">
      <button aria-label="检查"><svg><use href="#partcheck"/></svg></button><button aria-label="壁厚"><svg><use href="#trapcheck"/></svg></button>
      <button aria-label="斜率"><svg><use href="#rain"/></svg></button><button aria-label="拔模"><svg><use href="#slopetop"/></svg></button>
    </div>
    <div class="scroll"><svg class="car pale"><use href="#caretUp"/></svg><svg class="car"><use href="#caret"/></svg><svg class="carbar"><use href="#caretBar"/></svg></div>
    <div class="gname">部件验证</div><svg class="car gmore"><use href="#caret"/></svg>
  </div>
  <div class="group">
    <div class="gallery cols8">
      <button aria-label="型腔布局"><svg><use href="#cavity"/></svg></button><button aria-label="模具坐标"><svg><use href="#csys"/></svg></button><button aria-label="工件"><svg><use href="#wirebox"/></svg></button><button aria-label="布局"><svg><use href="#stack"/></svg></button><button aria-label="分割"><svg><use href="#blocks"/></svg></button><button aria-label="模架"><svg><use href="#moldbase"/></svg></button><button aria-label="标准件"><svg><use href="#pinplate"/></svg></button><button aria-label="重用库"><svg><use href="#library"/></svg></button>
      <button aria-label="顶杆"><svg><use href="#ejector"/></svg></button><button aria-label="滑块"><svg><use href="#slider"/></svg></button><button aria-label="镶块"><svg><use href="#insert"/></svg></button><button aria-label="浇口"><svg><use href="#sprue"/></svg></button><button aria-label="流道"><svg><use href="#runner"/></svg></button><button aria-label="腔体"><svg><use href="#pocket"/></svg></button><button aria-label="物料清单"><svg><use href="#bom"/></svg></button><button aria-label="视图管理"><svg><use href="#eye"/></svg></button>
    </div>
    <div class="scroll"><svg class="car pale"><use href="#caretUp"/></svg><svg class="car"><use href="#caret"/></svg><svg class="carbar"><use href="#caretBar"/></svg></div>
    <div class="gname">主要</div><svg class="car gmore"><use href="#caret"/></svg>
  </div>
  <div class="group">
    <div class="gallery">
      <button aria-label="检查区域"><svg><use href="#trap2"/></svg></button><button aria-label="曲面补片"><svg><use href="#patch"/></svg></button><button aria-label="定义区域"><svg><use href="#profile"/></svg></button><button aria-label="设计分型面"><svg><use href="#redmesh"/></svg></button>
      <button aria-label="编辑分型面"><svg><use href="#sheet"/></svg></button><button aria-label="定义型腔型芯"><svg><use href="#corecav"/></svg></button><button aria-label="交换模型"><svg><use href="#swap"/></svg></button><button aria-label="备份"><svg><use href="#docs"/></svg></button>
    </div>
    <div class="scroll"><svg class="car pale"><use href="#caretUp"/></svg><svg class="car"><use href="#caret"/></svg><svg class="carbar"><use href="#caretBar"/></svg></div>
    <div class="gname">分型刀具</div><svg class="car gmore"><use href="#caret"/></svg>
  </div>
  <div class="group">
    <div class="gallery">
      <button aria-label="水路图样"><svg><use href="#chan1"/></svg></button><button aria-label="直接水路"><svg><use href="#chan2"/></svg></button><button aria-label="定义水路"><svg><use href="#chan3"/></svg></button><button aria-label="连接水路"><svg><use href="#chan4"/></svg></button>
      <button aria-label="延伸水路"><svg><use href="#chan5"/></svg></button><button aria-label="调整水路"><svg><use href="#chan6"/></svg></button><button aria-label="冷却接头"><svg><use href="#fitting"/></svg></button><button aria-label="冷却回路"><svg><use href="#circuit"/></svg></button>
    </div>
    <div class="scroll"><svg class="car pale"><use href="#caretUp"/></svg><svg class="car"><use href="#caret"/></svg><svg class="carbar"><use href="#caretBar"/></svg></div>
    <div class="gname">冷却工具</div><svg class="car gmore"><use href="#caret"/></svg>
  </div>
  <div class="group">
    <div class="gallery cols14">
      <button aria-label="包容体"><svg><use href="#redcube"/></svg></button><button aria-label="分割实体"><svg><use href="#bluebox"/></svg></button><button aria-label="实体补片"><svg><use href="#crossbox"/></svg></button><button aria-label="参考圆角"><svg><use href="#layers"/></svg></button><button class="late" aria-label="型材"><svg><use href="#bench"/></svg></button>
      <button aria-label="创建方块"><svg><use href="#yellowbox"/></svg></button><button aria-label="拆分"><svg><use href="#redbox"/></svg></button><button aria-label="部件族"><svg><use href="#treehand"/></svg></button><button aria-label="剖切"><svg><use href="#cutaway"/></svg></button><button class="late" aria-label="标注"><svg><use href="#bracket"/></svg></button>
    </div>
  </div>
</section>

<section class="selbar">
  <button class="menubtn"><svg class="i18"><use href="#menulist"/></svg><span>菜单(<u>M</u>)</span><svg class="car"><use href="#caret"/></svg></button>
  <i class="vsep"></i>
  <div class="pick p1"><select aria-label="类型过滤器"><option>无选择过滤器</option></select><svg class="drop"><use href="#caret"/></svg></div>
  <div class="pick p2"><select aria-label="选择范围"><option>整个装配</option></select><svg class="drop"><use href="#caret"/></svg></div>
  <div class="snaps">
    <button aria-label="装配范围"><svg><use href="#s1"/></svg></button><button aria-label="重置过滤器"><svg><use href="#s2"/></svg></button><button class="tight" aria-label="颜色过滤器"><svg><use href="#s3"/></svg></button><button class="dd" aria-label="过滤器列表"><svg class="car"><use href="#caret"/></svg></button><button aria-label="取消选择"><svg><use href="#s4"/></svg></button><button aria-label="查找"><svg><use href="#s5"/></svg></button><button aria-label="高亮"><svg><use href="#s6"/></svg></button><button aria-label="矩形"><svg><use href="#s7"/></svg></button><button class="dd" aria-label="选择方式"><svg class="car"><use href="#caret"/></svg></button><button aria-label="着色"><svg><use href="#s8"/></svg></button><button class="hot" aria-label="实体"><svg><use href="#s9"/></svg></button><button aria-label="捕捉"><svg><use href="#s10"/></svg></button><button aria-label="端点"><svg><use href="#s11"/></svg></button><button aria-label="中点"><svg><use href="#s12"/></svg></button><button aria-label="控制点"><svg><use href="#s13"/></svg></button><button aria-label="极点"><svg><use href="#s14"/></svg></button><button aria-label="样条"><svg><use href="#s15"/></svg></button><button aria-label="交点"><svg><use href="#s16"/></svg></button><button aria-label="圆心"><svg><use href="#s17"/></svg></button><button aria-label="象限点"><svg><use href="#s18"/></svg></button><button aria-label="现有点"><svg><use href="#s19"/></svg></button>
  </div>
</section>

<main class="work">
  <aside class="side">
    <button class="sgear" aria-label="设置"><svg class="i16"><use href="#gear"/></svg></button>
    <button aria-label="装配导航器"><svg><use href="#asm"/></svg></button>
    <button aria-label="约束导航器"><svg><use href="#mirror"/></svg></button>
    <button aria-label="部件导航器"><svg><use href="#cyl"/></svg></button>
    <button aria-label="重用库"><svg><use href="#books"/></svg></button>
    <button class="seye" aria-label="视图"><svg><use href="#eye"/></svg></button>
    <button aria-label="分型导航器"><svg><use href="#molds"/></svg></button>
    <button class="sinfo" aria-label="信息"><svg><use href="#info"/></svg></button>
    <button class="sclock" aria-label="历史记录"><svg><use href="#clock"/></svg></button>
    <div class="sidearrows"><svg class="carbar pale flip"><use href="#caretBar"/></svg><svg class="car pale"><use href="#caretUp"/></svg><svg class="car"><use href="#caret"/></svg><svg class="carbar"><use href="#caretBar"/></svg></div>
  </aside>

  <section class="nav">
    <div class="navhead"><h2>分型导航器</h2><button class="max" aria-label="最大化"></button><button class="close" aria-label="关闭"><svg><use href="#cross"/></svg></button></div>
    <div class="tree">
      <div class="rows">
      <table>
        <colgroup><col><col class="c2"><col class="c3"></colgroup>
        <thead><tr><th>分型对象</th><th>数量</th><th>图层</th></tr></thead>
        <tbody>
          <tr><td><div class="n root"><svg class="g"><use href="#gMinus"/></svg><svg class="i16"><use href="#tRoot"/></svg>分型设计</div></td><td></td><td></td></tr>
          <tr><td><label class="n"><svg class="g"><use href="#gPlus"/></svg><input type="checkbox" checked><svg class="i16"><use href="#tCube"/></svg>产品实体</label></td><td>1</td><td>2</td></tr>
          <tr class="off"><td><label class="n"><svg class="g"><use href="#gTee"/></svg><input type="checkbox"><svg class="i16"><use href="#tBlock"/></svg>工件</label></td><td>0</td><td>0</td></tr>
          <tr><td><label class="n"><svg class="g"><use href="#gTee"/></svg><input type="checkbox"><svg class="i16"><use href="#tWire"/></svg>工件线框</label></td><td></td><td></td></tr>
          <tr class="off"><td><label class="n"><svg class="g"><use href="#gTee"/></svg><input type="checkbox"><svg class="i16"><use href="#tLine"/></svg>分型线</label></td><td>0</td><td>0</td></tr>
          <tr class="off"><td><label class="n"><svg class="g"><use href="#gTee"/></svg><input type="checkbox"><svg class="i16"><use href="#tGuide"/></svg>引导线</label></td><td>0</td><td>0</td></tr>
          <tr class="off"><td><label class="n"><svg class="g"><use href="#gTee"/></svg><input type="checkbox"><svg class="i16"><use href="#tFace"/></svg>分型面</label></td><td>0</td><td>0</td></tr>
          <tr class="off"><td><label class="n"><svg class="g"><use href="#gTee"/></svg><input type="checkbox"><svg class="i16"><use href="#tPatch"/></svg>曲面补片</label></td><td>0</td><td>0</td></tr>
          <tr class="off"><td><label class="n"><svg class="g"><use href="#gTee"/></svg><input type="checkbox"><svg class="i16"><use href="#tTrim"/></svg>修补实体</label></td><td>0</td><td>0</td></tr>
          <tr class="off"><td><label class="n"><svg class="g"><use href="#gTee"/></svg><input type="checkbox"><svg class="i16"><use href="#tFace"/></svg>分型面无副本</label></td><td>0</td><td>0</td></tr>
          <tr class="off"><td><label class="n"><svg class="g"><use href="#gTee"/></svg><input type="checkbox"><svg class="i16"><use href="#tPatch"/></svg>补片面无副本</label></td><td>0</td><td>0</td></tr>
          <tr class="off"><td><label class="n"><svg class="g"><use href="#gTee"/></svg><input type="checkbox"><svg class="i16"><use href="#tSplit"/></svg>切割实体</label></td><td>0</td><td>0</td></tr>
          <tr><td><label class="n"><svg class="g"><use href="#gPlus"/></svg><input type="checkbox"><svg class="i16"><use href="#tParts"/></svg>型腔</label></td><td></td><td></td></tr>
          <tr><td><label class="n"><svg class="g"><use href="#gEnd"/></svg><input type="checkbox"><svg class="i16"><use href="#tParts"/></svg>型芯</label></td><td></td><td></td></tr>
          <tr><td></td><td></td><td></td></tr><tr><td></td><td></td><td></td></tr><tr><td></td><td></td><td></td></tr><tr><td></td><td></td><td></td></tr><tr><td></td><td></td><td></td></tr><tr><td></td><td></td><td></td></tr><tr><td></td><td></td><td></td></tr><tr><td></td><td></td><td></td></tr><tr><td></td><td></td><td></td></tr>
        </tbody>
      </table>
      </div>
      <div class="hscroll"><button class="arr left" aria-label="向左滚动"></button><div class="thumb"><i></i><i></i><i></i></div><button class="arr right" aria-label="向右滚动"></button></div>
    </div>
  </section>

  <section class="view">
    <div class="doctabs"><div class="doctab"><svg class="i16"><use href="#part"/></svg><span>2-7.prt</span><svg class="mod"><use href="#modified"/></svg><button aria-label="关闭文件"><svg><use href="#cross"/></svg></button></div></div>
    <div class="canvas">
      <svg class="scene" role="img" aria-label="产品模型">
        <defs>
          <linearGradient id="body1" x1="0" x2="1" y1="0" y2="0"><stop offset="0" stop-color="#a14f2b"/><stop offset=".12" stop-color="#cc6a3d"/><stop offset=".35" stop-color="#ff9058"/><stop offset=".55" stop-color="#f08750"/><stop offset=".72" stop-color="#ffad72"/><stop offset=".85" stop-color="#e07844"/><stop offset="1" stop-color="#9c4f2c"/></linearGradient>
          <linearGradient id="body2" gradientUnits="userSpaceOnUse" x1="640" x2="840" y1="0" y2="0"><stop offset="0" stop-color="#b98334"/><stop offset=".15" stop-color="#eab552"/><stop offset=".45" stop-color="#ffd468"/><stop offset=".72" stop-color="#fff58c"/><stop offset=".9" stop-color="#f2c25a"/><stop offset="1" stop-color="#c08a38"/></linearGradient>
        </defs>
        <g transform="translate(138 97) scale(.33333)">
          <path d="M182 52h44v12h-40zM120 78q90-30 184 12l14 16q10 140 10 330l-6 84q-12 50-50 88-60-46-116-80-50-28-82-46l16-46-2-46q0-150 15-290z" fill="url(#body1)"/>
          <path d="M74 476q80 26 130 62 50 36 70 70-60-30-96-60-20-8-56-32-30-16-48-40z" fill="#572a17"/>
          <path d="M196 65v14M208 65v14M120 78q90-26 184 14M182 53h20M206 58h22M90 392q80-8 236 130" fill="none" stroke="#282a2b" stroke-width="3"/>
          <path d="M211 80c0 170 60 300 117 356M219 80c0 170 60 300 109 350" fill="none" stroke="#282a2b" stroke-width="3"/>
          <ellipse cx="132" cy="426" rx="20" ry="19" fill="#6c3820" stroke="#222" stroke-width="3"/><path d="M122 434q-4-22 24-24v30z" fill="#b8623a"/><ellipse cx="134" cy="437" rx="9" ry="6" fill="#2c2420"/>
          <ellipse cx="264" cy="511" rx="20" ry="21" fill="#6c3820" stroke="#222" stroke-width="3"/><path d="M254 522q-4-22 22-28v32z" fill="#b8623a"/><ellipse cx="266" cy="524" rx="11" ry="7" fill="#403634"/>
          <path d="M710 48q27-6 54 0v12q50 6 76 22l16 20q0 90 7 220-2 70-6 100l12 58q-24 16-66 38-10 20-30 18-30 8-44 36-20 4-32 22l-30 10-10 10q-54-60-48-180-1-150 21-332l24-24q20-16 56-18z" fill="#f7a048"/>
          <path d="M654 114q90-24 180 0l2 76q-90-24-188 6zM646 220q100-24 188-8v142q-90-14-190 4zM648 392q90-6 172 8v34l-10 44q-60 16-110 48l-16 20-36-50zM654 546l38-16-6 24-24 22z" fill="url(#body2)"/>
          <path d="M724 70q0 150-70 290M770 96q10 150 28 0M642 206q70-30 196 4M702 450l90-50M644 400h52v90h-60M644 444h50M716 380v56M724 384h36" fill="none" stroke="#f7a048" stroke-width="13"/>
          <path d="M645 102q80-30 190 0M642 374q90-28 190-4" fill="none" stroke="#f7a048" stroke-width="9"/>
          <path d="M660 92q90-20 170 4M680 70h110M666 590q60-90 180-116M700 500q60-30 120-36" fill="none" stroke="#e08c38" stroke-width="3"/>
          <path d="M714 276q0-14 14-14 12 2 12 16l-2 12 5 38-4 4-16-40q-8-6-9-16z" fill="#564b24"/><circle cx="798" cy="440" r="20" fill="#e9a447" stroke="#b57b30" stroke-dasharray="5 5" stroke-width="4"/><circle cx="662" cy="526" r="20" fill="#f0a949" stroke="#b57b30" stroke-dasharray="5 5" stroke-width="4"/>
          <path d="M634 182v20M618 430l4 80M640 574l16 24M800 514l36-18" fill="none" stroke="#a56a2c" stroke-width="5" stroke-dasharray="14 8"/>
          <path d="M463 736l7 46-7 108-8-108z" fill="#38a83c"/><path d="M472 899q60-4 100-8l58 9-50 8z" fill="#d22a30"/><path d="M460 900l-17-30q2-14 14-12z" fill="#0c2a9c"/>
        </g>
        <g class="axes"><text x="272" y="341" fill="#2f9a3a">YC</text><text x="289" y="382" fill="#2a55e8">ZC</text><text x="333" y="412" fill="#d22e34">XC</text></g>
        <path d="M44 434l4-4h16v20l-4 4H44z" fill="#b6b6b6"/><path d="M46 454V428" stroke="#2f9a3a" stroke-width="2"/><path d="M48 454h28" stroke="#d22e34" stroke-width="2"/><circle cx="46" cy="454" r="4" fill="#ddd"/><path d="M42 444l5 8" stroke="#1438d8" stroke-width="3"/>
        <g class="axes"><text x="42" y="427" fill="#2f9a3a">Y</text><text x="76" y="459" fill="#d22e34">X</text><text x="39" y="452" fill="#2a55e8">Z</text></g>
      </svg>
    </div>
  </section>
</main>

<footer class="status">选择要分析的产品实体</footer>

<section class="dialog" role="dialog" aria-label="检查区域">
  <header class="dhead"><svg class="i16"><use href="#gear"/></svg><h2>检查区域</h2><button aria-label="重置"><svg><use href="#reset"/></svg></button><button aria-label="关闭"><svg><use href="#cross"/></svg></button></header>
  <div class="dtabs" role="tablist"><button class="on" role="tab">计算</button><button role="tab">面</button><button role="tab">区域</button><button role="tab">信息</button></div>
  <div class="dpanel">
    <div class="sec"><h3>产品实体与方向</h3><svg class="chev"><use href="#chev"/></svg></div>
    <div class="drow sel"><div class="pickrow"><svg class="tick"><use href="#tick"/></svg>选择产品实体 (1)</div><button aria-label="选择实体"><svg><use href="#tCube"/></svg></button></div>
    <div class="drow dir"><div class="lab"><svg class="tick"><use href="#tick"/></svg>指定脱模方向</div><button class="sq" aria-label="反向"><svg class="i16"><use href="#reverse"/></svg></button><button class="sq" aria-label="矢量对话框"><svg class="i16"><use href="#vector"/></svg></button><div class="split"><button class="main" aria-label="自动判断矢量"><svg><use href="#infer"/></svg></button><button class="arrow" aria-label="矢量列表"><svg class="car"><use href="#caret"/></svg></button></div></div>
    <hr>
    <div class="sec second"><h3>计算</h3><svg class="chev"><use href="#chev"/></svg></div>
    <fieldset><legend>选项</legend>
      <label><input type="radio" name="mode" checked>保持现有的</label>
      <label><input type="radio" name="mode">仅编辑区域</label>
      <label><input type="radio" name="mode">全部重置</label>
    </fieldset>
    <div class="drow calcrow"><div class="lab">计算</div><button class="calcbtn" aria-label="计算"><svg><use href="#calc"/></svg></button></div>
    <hr>
  </div>
  <div class="dfoot"><button disabled>确定</button><button disabled>应用</button><button>取消</button></div>
  <div class="mark">
    <svg viewBox="162 26 216 248"><g opacity=".85">
      <path d="M162 88 270 26l46 24q20 40 10 64-40-30-84-40-40-8-80 14z" fill="#d4effc"/>
      <path d="M314 50l64 38v76q-20 30-46 42-6-2-4-40 8-60-14-116z" fill="#7dd2f8"/>
      <path d="M378 164v48l-44 24q-44 4-64-16 60-6 108-56z" fill="#56b9e8"/>
      <path d="M212 186q14 44 60 46 30 8 60 6l-62 36-60-36q-10-30 2-52z" fill="#5cc3f2"/>
      <path d="M162 212v-50q10-30 50-44-6 70 4 120z" fill="#8dd2f2"/>
      <path d="M162 164V88q40-24 84-20-60 20-84 96z" fill="#b4e5fb"/></g>
      <path d="M270 80l60 34v70l-60 36-60-36v-70z" fill="#f6fafc"/>
      <path d="M270 94l48 28-48 28-48-28z" fill="#b9e6fa"/><path d="M222 122l48 28v56l-48-28z" fill="#96d3f1"/><path d="M318 122l-48 28v56l48-28z" fill="#6fbfe6"/>
      <path d="M162 164q14-30 50-46M170 72q100-12 156 44M314 50q24 66 14 136M378 160q-50 58-138 60M212 118q-10 100 60 136" fill="none" stroke="#fff" stroke-width="3"/>
      <path d="M162 138h216" stroke="#5f8ca4" stroke-opacity=".45" stroke-width="3"/>
    </svg>
    <div class="marktext"><b>3D世界网</b><span>WWW.3DSJW.COM</span></div>
  </div>
</section>
</body>
</html>
```
FILE: styles.css
```css
* { box-sizing: border-box; }
body {
  margin: 0;
  height: 100vh;
  overflow: hidden;
  display: flex;
  flex-direction: column;
  position: relative;
  background: #fff;
  color: #1a1a1a;
  font: 12px/16px "Noto Sans", "Noto Sans CJK SC", sans-serif;
}
button {
  font: inherit;
  color: inherit;
  background: none;
  border: 0;
  padding: 0;
  display: flex;
  align-items: center;
  justify-content: center;
}
h1, h2, h3 { margin: 0; font-size: 12px; font-weight: 400; }
svg { display: block; flex: none; }
.sprite { position: absolute; width: 0; height: 0; }
.i16 { width: 16px; height: 16px; }
.i18 { width: 18px; height: 18px; }
.car { width: 6px; height: 4px; fill: #1a1a1a; }
.carbar { width: 8px; height: 7px; fill: #1a1a1a; }
.pale, .pale .car { fill: #a8a8a8; }
.flip { transform: rotate(180deg); }
.vsep { flex: none; width: 1px; align-self: stretch; background: #d8d8d8; }

/* title bar */
.titlebar { display: flex; align-items: center; height: 26px; flex: none; white-space: nowrap; font-size: 11px; }
.titlebar .vsep { margin: 4px 4px; }
.logo { width: 32px; font: 700 22px/26px "Liberation Sans", sans-serif; color: #8296a8; }
.qb { width: 22px; height: 24px; }
.qc { width: 10px; height: 24px; }
.qt { gap: 4px; padding: 0 5px 0 2px; height: 24px; }
.apptitle { margin-left: 349px; flex: 1; font-size: 12px; }
.brand { font: 700 12px/16px "Liberation Sans", sans-serif; color: #1a8f90; }

/* menu tabs */
.menu { display: flex; height: 28px; flex: none; background: #dadada; font-size: 13px; white-space: nowrap; }
.menu button { padding: 0 13px; }
.menu .file { width: 76px; padding: 0 7px 0 0; margin-right: 2px; background: #559fb8; color: #fff; }
.menu .on { background: #fff; margin-top: 1px; color: #046488; }
.find { margin: 4px 0 4px auto; width: 69px; border: 1px solid #b0b0b0; border-right: 0; background: #fff; padding: 0 2px; font: 11px/16px "Noto Sans", "Noto Sans CJK SC", sans-serif; }
.find::placeholder { color: #a0a0a0; }

/* ribbon */
.ribbon { display: flex; height: 94px; flex: none; border-bottom: 1px solid #dadada; overflow: hidden; padding: 5px 0 4px; font-size: 11px; }
.init { width: 68px; flex: none; flex-direction: column; justify-content: flex-start; gap: 4px; border-right: 1px solid #dadada; padding-right: 3px; white-space: nowrap; }
.initic { width: 30px; height: 32px; }
.group { flex: none; display: grid; grid-template-columns: auto 18px; grid-template-rows: 66px 1fr; border-right: 1px solid #dadada; padding-left: 4px; }
.gallery { display: grid; grid-template-columns: repeat(4, 33px); grid-template-rows: 33px 33px; box-shadow: inset 0 0 0 1px #dadada; }
.gallery svg { width: 24px; height: 24px; }
.cols2 { grid-template-columns: repeat(2, 33px); }
.cols8 { grid-template-columns: repeat(8, 33px); }
.cols14 { grid-template-columns: repeat(14, 33px); }
.late { grid-column: 14; }
.scroll { display: flex; flex-direction: column; align-items: center; justify-content: space-between; padding: 9px 0 8px 0; }
.gname { text-align: center; color: #046488; line-height: 26px; }
.gmore { align-self: center; justify-self: center; }

/* selection bar */
.selbar { display: flex; align-items: center; height: 32px; flex: none; border-bottom: 1px solid #84989c; font-size: 11px; }
.selbar .vsep { margin: 4px 12px 4px 5px; }
.menubtn { gap: 3px; padding-left: 4px; width: 76px; justify-content: flex-start; white-space: nowrap; }
.menubtn .car { margin-left: 3px; }
.pick { position: relative; }
.pick select { display: block; appearance: none; width: 100%; height: 20px; border: 1px solid #a0a0a0; border-radius: 0; background: #fff; color: #1a1a1a; padding: 0 16px 0 2px; font: 11px/16px "Noto Sans", "Noto Sans CJK SC", sans-serif; }
.drop { position: absolute; right: 5px; top: 8px; width: 7px; height: 5px; pointer-events: none; }
.p1 { width: 133px; margin-right: 9px; }
.p2 { width: 140px; margin-right: 4px; }
.snaps { display: flex; }
.snaps button { width: 25px; height: 24px; }
.snaps svg { width: 18px; height: 18px; }
.snaps .car { width: 6px; height: 4px; }
.snaps .tight { width: 20px; }
.snaps .dd { width: 13px; }
.snaps .hot { background: #c9e6ee; border: 1px solid #a6cfdb; }

/* work area */
.work { flex: 1; display: flex; min-height: 0; border-bottom: 1px solid #a0a0a0; }
.side { width: 35px; flex: none; background: #dadada; border-right: 1px solid #a0a0a0; }
.side button { width: 34px; height: 50px; overflow: hidden; }
.side button svg { width: 32px; height: 32px; }
.side .sgear { height: 26px; margin-bottom: 16px; padding-right: 6px; }
.side .sgear svg { width: 16px; height: 16px; }
.side .seye svg { width: 28px; height: 28px; }
.side .sinfo { height: 62px; margin-top: 6px; }
.side .sclock { align-items: flex-end; }
.side .sclock svg { width: 34px; height: 36px; }
.sidearrows { display: flex; flex-direction: column; align-items: center; justify-content: space-between; height: 54px; margin-top: 4px; padding-right: 6px; }

.nav { width: 357px; flex: none; margin: 2px 4px 1px 6px; border: 1px solid #a0a0a0; display: flex; flex-direction: column; background: #fff; box-shadow: 4px 0 0 #dadada; }
.navhead { display: flex; align-items: center; height: 23px; flex: none; padding: 0 11px 0 8px; }
.navhead h2 { flex: 1; font-size: 11px; font-weight: 700; }
.max { width: 12px; height: 10px; border: 1px solid #999; margin-right: 8px; }
.close svg { width: 11px; height: 11px; }
.tree { flex: 1; min-height: 0; display: flex; flex-direction: column; margin: 0 6px 4px 3px; border: 1px solid #d8d8d8; padding: 1px 0 0 1px; }
.rows { flex: 1; min-height: 0; overflow: hidden; }
table { width: 100%; border-collapse: separate; border-spacing: 0; table-layout: fixed; }
.c2 { width: 60px; }
.c3 { width: 34px; }
th { height: 21px; padding: 0 5px; text-align: left; font-weight: 400; background: #efefef; border-bottom: 1px solid #c8c8c8; border-left: 1px solid #c8c8c8; white-space: nowrap; }
th:first-child { border-left: 0; }
td { height: 20px; padding: 0 0 0 5px; border-bottom: 1px solid #e8e8e8; border-left: 1px solid #e8e8e8; line-height: 16px; }
td:first-child { border-left: 0; }
tbody tr:nth-child(even) { background: #fafafa; }
.n { display: flex; align-items: center; height: 19px; padding-left: 19px; white-space: nowrap; }
.root { padding-left: 0; }
.n .g { width: 16px; height: 20px; }
.n .i16 { margin: 0 3px 0 2px; }
.root .i16 { margin: 0 2px 0 -1px; }
.n input { appearance: none; width: 12px; height: 12px; margin: 0; border: 1px solid #111; background: #fff; flex: none; display: flex; align-items: center; justify-content: center; }
.n input:checked::before { content: ""; width: 5px; height: 9px; border: solid #d82020; border-width: 0 2px 2px 0; transform: rotate(40deg); }
.off { color: #c6c6c6; }
.hscroll { display: flex; height: 17px; flex: none; background: #efefef; }
.arr { width: 18px; flex: none; }
.arr::before { content: ""; border: 4px solid transparent; }
.left::before { border-right-color: #333; margin-right: 4px; }
.right::before { border-left-color: #333; margin-left: 4px; }
.thumb { width: 238px; margin: 1px auto 1px 0; display: flex; align-items: center; justify-content: center; gap: 2px; border: 1px solid #999; border-radius: 2px; background: linear-gradient(#f6f6f6, #dcdcdc 50%, #cacaca); }
.thumb i { width: 1px; height: 7px; background: #444; }

/* graphics view */
.view { flex: 1; min-width: 0; display: flex; flex-direction: column; }
.doctabs { height: 23px; flex: none; background: #fff; border-bottom: 2px solid #559fb8; }
.doctab { display: flex; align-items: center; width: 103px; height: 21px; padding-left: 6px; gap: 4px; background: #559fb8; color: #fff; white-space: nowrap; }
.mod { width: 11px; height: 11px; margin-left: 2px; }
.doctab button { color: #c4d0d4; margin-left: 1px; }
.doctab button svg { width: 9px; height: 9px; }
.canvas { flex: 1; min-height: 0; border-left: 1px solid #dadada; background: linear-gradient(#252627, #3e3f40 45%, #58595a); }
.scene { width: 100%; height: 100%; margin-left: -1px; }
.axes { font: 13px "Liberation Sans", sans-serif; }

.status { height: 8px; flex: none; overflow: hidden; padding-top: 2px; text-indent: -2px; font-size: 11px; font-weight: 700; }

/* dialog */
.dialog { position: absolute; right: 8px; top: 54px; bottom: 9px; width: 328px; display: flex; flex-direction: column; background: #efefef; border: solid #dadada; border-width: 0 1px 2px; }
.dhead { display: flex; align-items: center; height: 24px; flex: none; padding: 0 9px 0 6px; background: #559fb8; color: #fff; margin: 0 -1px; }
.dhead h2 { flex: 1; font-size: 14px; margin-left: 7px; }
.dhead button { margin-left: 8px; }
.dhead button svg { width: 12px; height: 12px; }
.dtabs { display: flex; align-items: flex-end; margin: 7px 9px -1px 9px; height: 32px; flex: none; position: relative; }
.dtabs button { width: 52px; height: 29px; margin-bottom: 1px; border: 1px solid #d0d0d0; border-left: 0; border-bottom: 0; }
.dtabs .on { width: 56px; height: 32px; margin: 0; background: #fff; border: 1px solid #bdbdbd; border-bottom: 0; }
.dpanel { flex: 1; min-height: 0; margin: 0 9px; border: 1px solid #bdbdbd; background: #fff; padding: 5px 4px 0; }
.sec { display: flex; justify-content: space-between; align-items: center; height: 20px; padding: 0 6px 0 7px; }
.sec h3 { font-size: 14px; color: #046488; }
.chev { width: 12px; height: 9px; }
.drow { display: flex; align-items: center; gap: 2px; margin: 0 9px; height: 32px; }
.sel { margin-top: 7px; }
.pickrow { flex: 1; height: 32px; display: flex; align-items: center; background: #ffe078; }
.sel button { width: 32px; height: 32px; background: #ffe078; }
.sel button svg { width: 22px; height: 22px; }
.tick { width: 12px; height: 12px; margin: 0 6px 0 2px; }
.dir { margin-top: 2px; }
.lab { flex: 1; display: flex; align-items: center; }
.sq { width: 24px; height: 24px; border: 1px solid #a8a8a8; }
.split { display: flex; width: 49px; height: 32px; border: 1px solid #a8a8a8; }
.split .main { flex: 1; border-right: 1px solid #a8a8a8; }
.split .main svg { width: 18px; height: 24px; }
.split .arrow { width: 17px; }
hr { border: 0; height: 1px; background: #c4c4c4; margin: 8px 0 0; }
.second { margin-top: 6px; }
fieldset { margin: 7px 9px 0; padding: 3px 4px 3px; border: 1px solid #d8d8d8; background: #efefef; height: 96px; }
legend { float: left; width: 100%; padding: 0 0 0 4px; color: #046488; }
fieldset label { display: flex; align-items: center; clear: both; height: 23px; gap: 6px; }
fieldset legend + label { padding-top: 3px; height: 26px; }
fieldset input { appearance: none; width: 12px; height: 12px; margin: 0; border: 1px solid #8e8e8e; border-radius: 50%; background: radial-gradient(#fff, #d4d4d4); }
fieldset input:checked { background: radial-gradient(circle, #38b0e8 0 1px, #0c4a78 3px, #f4f4f4 4px); }
.calcrow { margin-top: 20px; }
.calcbtn { width: 32px; height: 32px; border: 1px solid #a8a8a8; }
.calcbtn svg { width: 20px; height: 26px; }
.dfoot { display: flex; justify-content: flex-end; gap: 5px; padding: 12px 15px 9px 0; flex: none; }
.dfoot button { width: 54px; height: 25px; border: 1px solid #a8a8a8; background: #dadada; }
.dfoot button:disabled { background: #efefef; color: #a8a8a8; }
.mark { position: absolute; left: 52px; bottom: 2px; display: flex; gap: 8px; pointer-events: none; }
.mark svg { width: 72px; height: 83px; }
.marktext { display: flex; flex-direction: column; justify-content: flex-end; color: #fff; opacity: .35; padding-bottom: 8px; white-space: nowrap; }
.marktext b { font-size: 40px; line-height: 36px; }
.marktext span { font-size: 18px; line-height: 20px; }
```
